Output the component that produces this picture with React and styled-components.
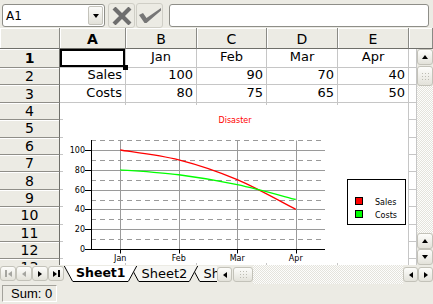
import React from 'react';
import styled, { createGlobalStyle, css } from 'styled-components';

const BEIGE = '#ecebe4';
const FONT = `"DejaVu Sans", Verdana, sans-serif`;

const GlobalStyle = createGlobalStyle`
  html, body { margin: 0; padding: 0; background: ${BEIGE}; overflow: hidden; }
  body { font-family: ${FONT}; }
  * { box-sizing: border-box; }
`;

const Window = styled.div`
  width: 433px;
  height: 304px;
  display: flex;
  flex-direction: column;
  background: ${BEIGE};
  overflow: hidden;
  font-family: ${FONT};
  color: #000;
`;

/* ---------- toolbar ---------- */
const Toolbar = styled.div`
  height: 28px;
  flex: none;
  display: flex;
  align-items: flex-start;
  padding: 4px 0 0 2px;
`;

const NameBox = styled.div`
  width: 103px;
  height: 23px;
  display: flex;
  align-items: center;
  padding: 0 1px 0 3px;
  background: #fff;
  border: 1px solid #8e8e88;
  border-radius: 3px;
`;

const NameText = styled.span`
  flex: 1;
  font-size: 12px;
`;

const DropButton = styled.div`
  width: 15px;
  height: 19px;
  display: flex;
  align-items: center;
  justify-content: center;
  background: linear-gradient(#fbfbf9, #e2e1d9);
  border: 1px solid #c4c3bb;
  border-radius: 2px;
`;

const ButtonGroup = styled.div`
  display: flex;
  gap: 1px;
  margin: -1px 0 0 3px;
`;

const ToolButton = styled.div`
  width: 27px;
  height: 25px;
  display: flex;
  align-items: center;
  justify-content: center;
  background: ${BEIGE};
  border: 1px solid #cfcec6;
  border-radius: 3px;
`;

const FormulaInput = styled.div`
  width: 260px;
  height: 23px;
  margin-left: 6px;
  background: #fff;
  border: 1px solid #8e8e88;
  border-radius: 3px;
`;

/* ---------- arrows ---------- */
const Arrow = styled.span`
  display: block;
  width: 0;
  height: 0;
  ${({ $dir, $color = '#000' }) => {
    if ($dir === 'up')
      return css`border-left: 3.5px solid transparent; border-right: 3.5px solid transparent; border-bottom: 4px solid ${$color};`;
    if ($dir === 'down')
      return css`border-left: 3.5px solid transparent; border-right: 3.5px solid transparent; border-top: 4px solid ${$color};`;
    if ($dir === 'left')
      return css`border-top: 3.5px solid transparent; border-bottom: 3.5px solid transparent; border-right: 4px solid ${$color};`;
    return css`border-top: 3.5px solid transparent; border-bottom: 3.5px solid transparent; border-left: 4px solid ${$color};`;
  }}
`;

const NavBar = styled.span`
  display: block;
  width: 2px;
  height: 7px;
  background: ${({ $color }) => $color};
`;

/* ---------- column header ---------- */
const COLS = '60px 66px 71px 70px 71px 71px 1fr';

const HeaderRow = styled.div`
  height: 21px;
  flex: none;
  display: grid;
  grid-template-columns: ${COLS};
`;

const HeaderCell = styled.div`
  display: flex;
  align-items: center;
  justify-content: center;
  background: ${BEIGE};
  border-right: 1px solid #8a8a85;
  border-bottom: 1px solid #6f6f6a;
  box-shadow: inset 1px 1px 0 #fff;
  font-size: 14px;
  font-weight: ${({ $active }) => ($active ? 700 : 400)};
  padding-top: 1px;
`;

/* ---------- body ---------- */
const SheetBody = styled.div`
  height: 216px;
  flex: none;
  display: flex;
`;

const GridPane = styled.div`
  position: relative;
  width: 417px;
  overflow: hidden;
`;

const CellGrid = styled.div`
  display: grid;
  grid-template-columns: 60px 66px 71px 70px 71px 71px 8px;
  grid-template-rows: 19px repeat(12, 17.4px);
`;

const RowHeader = styled.div`
  display: flex;
  align-items: center;
  justify-content: center;
  background: ${BEIGE};
  border-right: 1px solid #6f6f6a;
  border-bottom: 1px solid #8f8e88;
  box-shadow: inset 0 1px 0 #fff;
  font-size: 14px;
  font-weight: ${({ $active }) => ($active ? 700 : 400)};
`;

const justify = { left: 'flex-start', center: 'center', right: 'flex-end' };

const Cell = styled.div`
  position: relative;
  display: flex;
  align-items: center;
  justify-content: ${({ $align }) => justify[$align] || 'flex-start'};
  padding: 0 3px 2px 3px;
  background: #fff;
  border-right: 1px solid #c6c6c6;
  border-bottom: 1px solid #c6c6c6;
  font-size: 13px;
  line-height: 14px;
  white-space: nowrap;
  ${({ $selected }) =>
    $selected &&
    css`
      z-index: 2;
      &::after {
        content: '';
        position: absolute;
        inset: 0;
        border: 2px solid #000;
      }
      &::before {
        content: '';
        position: absolute;
        right: -3px;
        bottom: -3px;
        width: 5px;
        height: 5px;
        background: #000;
        z-index: 3;
      }
    `}
`;

const ChartFrame = styled.div`
  position: absolute;
  left: 63px;
  top: 56px;
  width: 345px;
  height: 158px;
  background: #fff;
  z-index: 4;
`;

/* ---------- scrollbars ---------- */
const VScroll = styled.div`
  width: 16px;
  display: flex;
  flex-direction: column;
`;

const ScrollBtn = styled.div`
  flex: none;
  width: ${({ $w = 16 }) => $w}px;
  height: ${({ $h = 16 }) => $h}px;
  display: flex;
  align-items: center;
  justify-content: center;
  gap: 1px;
  background: linear-gradient(#fdfdfb, #e3e2da);
  border: 1px solid #c3c2b9;
  border-radius: 3px;
`;

const Thumb = styled(ScrollBtn)`
  margin: ${({ $vertical }) => ($vertical ? '1px 0 0 0' : '0 0 0 1px')};
`;

const Grip = styled.span`
  display: block;
  width: 9px;
  height: 9px;
  background-image: radial-gradient(circle, #bdbcb3 0.9px, transparent 1px);
  background-size: 3px 3px;
`;

const Track = styled.div`
  flex: 1;
  align-self: stretch;
  background: repeating-conic-gradient(#fdfdfc 0% 25%, #e4e3dc 0% 50%) 0 0 / 2px 2px;
`;

/* ---------- tab bar ---------- */
const TabBar = styled.div`
  height: 19px;
  flex: none;
  display: flex;
  align-items: flex-start;
`;

const NavGroup = styled.div`
  display: flex;
  width: 64px;
  margin-top: 1px;
  flex: none;
`;

const TabStrip = styled.div`
  width: 153px;
  flex: none;
  display: flex;
  overflow: hidden;
  margin-top: 1px;
`;

const TabWrap = styled.div`
  display: flex;
  flex: none;
  height: 16px;
  position: relative;
  margin-left: ${({ $first }) => ($first ? 0 : -7)}px;
  z-index: ${({ $z }) => $z};
`;

const TabLabel = styled.span`
  height: 16px;
  display: flex;
  align-items: center;
  padding: 0 2px 0 3px;
  background: ${({ $active }) => ($active ? '#fff' : '#f6f6f3')};
  border-bottom: 1px solid #000;
  font-size: ${({ $active }) => ($active ? 12.5 : 13)}px;
  font-weight: ${({ $active }) => ($active ? 700 : 400)};
  line-height: 1;
  white-space: nowrap;
`;

const HScroll = styled.div`
  flex: 1;
  height: 19px;
  display: flex;
  align-items: center;
`;

/* ---------- status bar ---------- */
const StatusBar = styled.div`
  flex: 1;
  display: flex;
  align-items: flex-start;
  padding: 1px 2px;
`;

const StatusBox = styled.div`
  width: 55px;
  height: 17px;
  display: flex;
  align-items: center;
  padding-left: 8px;
  border: 1px solid;
  border-color: #a3a29b #fff #fff #a3a29b;
  font-family: "Liberation Sans", Arial, sans-serif;
  font-size: 13px;
`;

/* ---------- data ---------- */
const columns = ['A', 'B', 'C', 'D', 'E', ''];
const rows = [
  [{ v: '' }, { v: 'Jan', a: 'center' }, { v: 'Feb', a: 'center' }, { v: 'Mar', a: 'center' }, { v: 'Apr', a: 'center' }, { v: '' }],
  [{ v: 'Sales', a: 'right' }, { v: '100', a: 'right' }, { v: '90', a: 'right' }, { v: '70', a: 'right' }, { v: '40', a: 'right' }, { v: '' }],
  [{ v: 'Costs', a: 'right' }, { v: '80', a: 'right' }, { v: '75', a: 'right' }, { v: '65', a: 'right' }, { v: '50', a: 'right' }, { v: '' }],
];
for (let i = 0; i < 10; i++) rows.push(Array.from({ length: 6 }, () => ({ v: '' })));

const cats = ['Jan', 'Feb', 'Mar', 'Apr'];
const series = [
  { name: 'Sales', color: '#ff0000', values: [100, 90, 70, 40] },
  { name: 'Costs', color: '#00ff00', values: [80, 75, 65, 50] },
];
const PL = 28, PR = 262, PB = 144;
const yOf = (v) => PB - v * 0.99;
const xOf = (i) => PL + ((PR - PL) / 4) * (i + 0.5);
const crisp = (n) => Math.round(n) + 0.5;

function smoothPath(pts) {
  let d = `M${pts[0][0]},${pts[0][1]}`;
  for (let i = 0; i < pts.length - 1; i++) {
    const p0 = pts[i - 1] || pts[i];
    const p1 = pts[i];
    const p2 = pts[i + 1];
    const p3 = pts[i + 2] || p2;
    const c1 = [p1[0] + (p2[0] - p0[0]) / 6, p1[1] + (p2[1] - p0[1]) / 6];
    const c2 = [p2[0] - (p3[0] - p1[0]) / 6, p2[1] - (p3[1] - p1[1]) / 6];
    d += ` C${c1[0]},${c1[1]} ${c2[0]},${c2[1]} ${p2[0]},${p2[1]}`;
  }
  return d;
}

function Chart() {
  const solid = [0, 20, 40, 60, 80, 100];
  const dashed = [10, 30, 50, 70, 90, 110];
  const top = crisp(yOf(110));
  const bottom = crisp(yOf(0));
  return (
    <svg width="345" height="158" viewBox="0 0 345 158" fontFamily={FONT}>
      <text x="172" y="18" fill="#ff0000" fontSize="8" textAnchor="middle">Disaster</text>
      {dashed.map((v) => (
        <line key={'d' + v} x1={PL} x2={PR} y1={crisp(yOf(v))} y2={crisp(yOf(v))} stroke="#9a9a9a" strokeDasharray="5 4" />
      ))}
      {solid.map((v) => (
        <line key={'s' + v} x1={PL} x2={PR} y1={crisp(yOf(v))} y2={crisp(yOf(v))} stroke="#9a9a9a" />
      ))}
      {cats.map((c, i) => (
        <line key={'v' + c} x1={crisp(xOf(i))} x2={crisp(xOf(i))} y1={top} y2={bottom} stroke="#9a9a9a" />
      ))}
      <line x1={PL + 0.5} x2={PL + 0.5} y1={top - 0.5} y2={bottom + 0.5} stroke="#000" />
      <line x1={PL} x2={PR} y1={bottom} y2={bottom} stroke="#000" />
      {solid.map((v) => (
        <g key={'t' + v}>
          <line x1={PL - 6} x2={PL} y1={crisp(yOf(v))} y2={crisp(yOf(v))} stroke="#000" />
          <text x={PL - 6} y={yOf(v) + 3} fontSize="8" textAnchor="end">{v}</text>
        </g>
      ))}
      {cats.map((c, i) => (
        <g key={'x' + c}>
          <line x1={crisp(xOf(i))} x2={crisp(xOf(i))} y1={bottom} y2={bottom + 4} stroke="#000" />
          <text x={xOf(i)} y="156" fontSize="8" textAnchor="middle">{c}</text>
        </g>
      ))}
      {series.map((s) => (
        <path
          key={s.name}
          d={smoothPath(s.values.map((v, i) => [xOf(i), yOf(v)]))}
          fill="none"
          stroke={s.color}
          strokeWidth="1.3"
        />
      ))}
      <rect x="284.5" y="74.5" width="58" height="45" fill="#fff" stroke="#000" />
      {series.map((s, i) => (
        <g key={'l' + s.name}>
          <rect x="292.5" y={92.5 + i * 13} width="7" height="7" fill={s.color} stroke="#000" />
          <text x="312" y={100 + i * 13} fontSize="8">{s.name}</text>
        </g>
      ))}
    </svg>
  );
}

function CrossIcon() {
  return (
    <svg width="20" height="18" viewBox="0 0 20 18">
      <path d="M3.5 2.5 L16.5 15.5 M16.5 2.5 L3.5 15.5" stroke="#6e6e6e" strokeWidth="4.2" strokeLinecap="square" />
    </svg>
  );
}

function CheckIcon() {
  return (
    <svg width="24" height="18" viewBox="0 0 24 18">
      <polygon points="1,8 5,6 8.5,11 23,1 23,3.5 8.5,16 6.5,16" fill="#767676" />
    </svg>
  );
}

function Slant({ side, fill }) {
  if (side === 'left') {
    return (
      <svg width="9" height="16" viewBox="0 0 9 16" style={{ display: 'block', flex: 'none' }}>
        <polygon points="0,0 9,0 9,16 8.6,16" fill={fill} />
        <line x1="0.3" y1="0" x2="8.7" y2="15.5" stroke="#000" />
      </svg>
    );
  }
  return (
    <svg width="9" height="16" viewBox="0 0 9 16" style={{ display: 'block', flex: 'none' }}>
      <polygon points="0,0 9,0 0.4,16 0,16" fill={fill} />
      <line x1="8.7" y1="0" x2="0.3" y2="15.5" stroke="#000" />
    </svg>
  );
}

function SheetTab({ label, active, first, z }) {
  const fill = active ? '#fff' : '#f6f6f3';
  return (
    <TabWrap $first={first} $z={z}>
      <Slant side="left" fill={fill} />
      <TabLabel $active={active}>{label}</TabLabel>
      <Slant side="right" fill={fill} />
    </TabWrap>
  );
}

export default function App() {
  return (
    <>
      <GlobalStyle />
      <Window>
        <Toolbar>
          <NameBox>
            <NameText>A1</NameText>
            <DropButton>
              <Arrow $dir="down" />
            </DropButton>
          </NameBox>
          <ButtonGroup>
            <ToolButton>
              <CrossIcon />
            </ToolButton>
            <ToolButton>
              <CheckIcon />
            </ToolButton>
          </ButtonGroup>
          <FormulaInput />
        </Toolbar>

        <HeaderRow>
          <HeaderCell />
          {columns.map((c, i) => (
            <HeaderCell key={i} $active={c === 'A'}>{c}</HeaderCell>
          ))}
        </HeaderRow>

        <SheetBody>
          <GridPane>
            <CellGrid>
              {rows.map((r, ri) => (
                <React.Fragment key={ri}>
                  <RowHeader $active={ri === 0}>{ri + 1}</RowHeader>
                  {r.map((cell, ci) => (
                    <Cell key={ci} $align={cell.a} $selected={ri === 0 && ci === 0}>
                      {cell.v}
                    </Cell>
                  ))}
                </React.Fragment>
              ))}
            </CellGrid>
            <ChartFrame>
              <Chart />
            </ChartFrame>
          </GridPane>
          <VScroll>
            <ScrollBtn><Arrow $dir="up" /></ScrollBtn>
            <Thumb $vertical $h={20}><Grip /></Thumb>
            <Track />
            <ScrollBtn><Arrow $dir="up" /></ScrollBtn>
            <ScrollBtn><Arrow $dir="down" /></ScrollBtn>
          </VScroll>
        </SheetBody>

        <TabBar>
          <NavGroup>
            <ScrollBtn $h={15}><NavBar $color="#a5a5a0" /><Arrow $dir="left" $color="#a5a5a0" /></ScrollBtn>
            <ScrollBtn $h={15}><Arrow $dir="left" $color="#a5a5a0" /></ScrollBtn>
            <ScrollBtn $h={15}><Arrow $dir="right" /></ScrollBtn>
            <ScrollBtn $h={15}><Arrow $dir="right" /><NavBar $color="#000" /></ScrollBtn>
          </NavGroup>
          <TabStrip>
            <SheetTab label="Sheet1" active first z={3} />
            <SheetTab label="Sheet2" z={2} />
            <SheetTab label="Sheet3" z={1} />
          </TabStrip>
          <HScroll>
            <ScrollBtn $w={15} $h={15}><Arrow $dir="left" /></ScrollBtn>
            <Thumb $w={20} $h={15}><Grip /></Thumb>
            <Track />
            <ScrollBtn $w={15} $h={15}><Arrow $dir="left" /></ScrollBtn>
            <ScrollBtn $w={15} $h={15}><Arrow $dir="right" /></ScrollBtn>
          </HScroll>
        </TabBar>

        <StatusBar>
          <StatusBox>Sum: 0</StatusBox>
        </StatusBar>
      </Window>
    </>
  );
}
